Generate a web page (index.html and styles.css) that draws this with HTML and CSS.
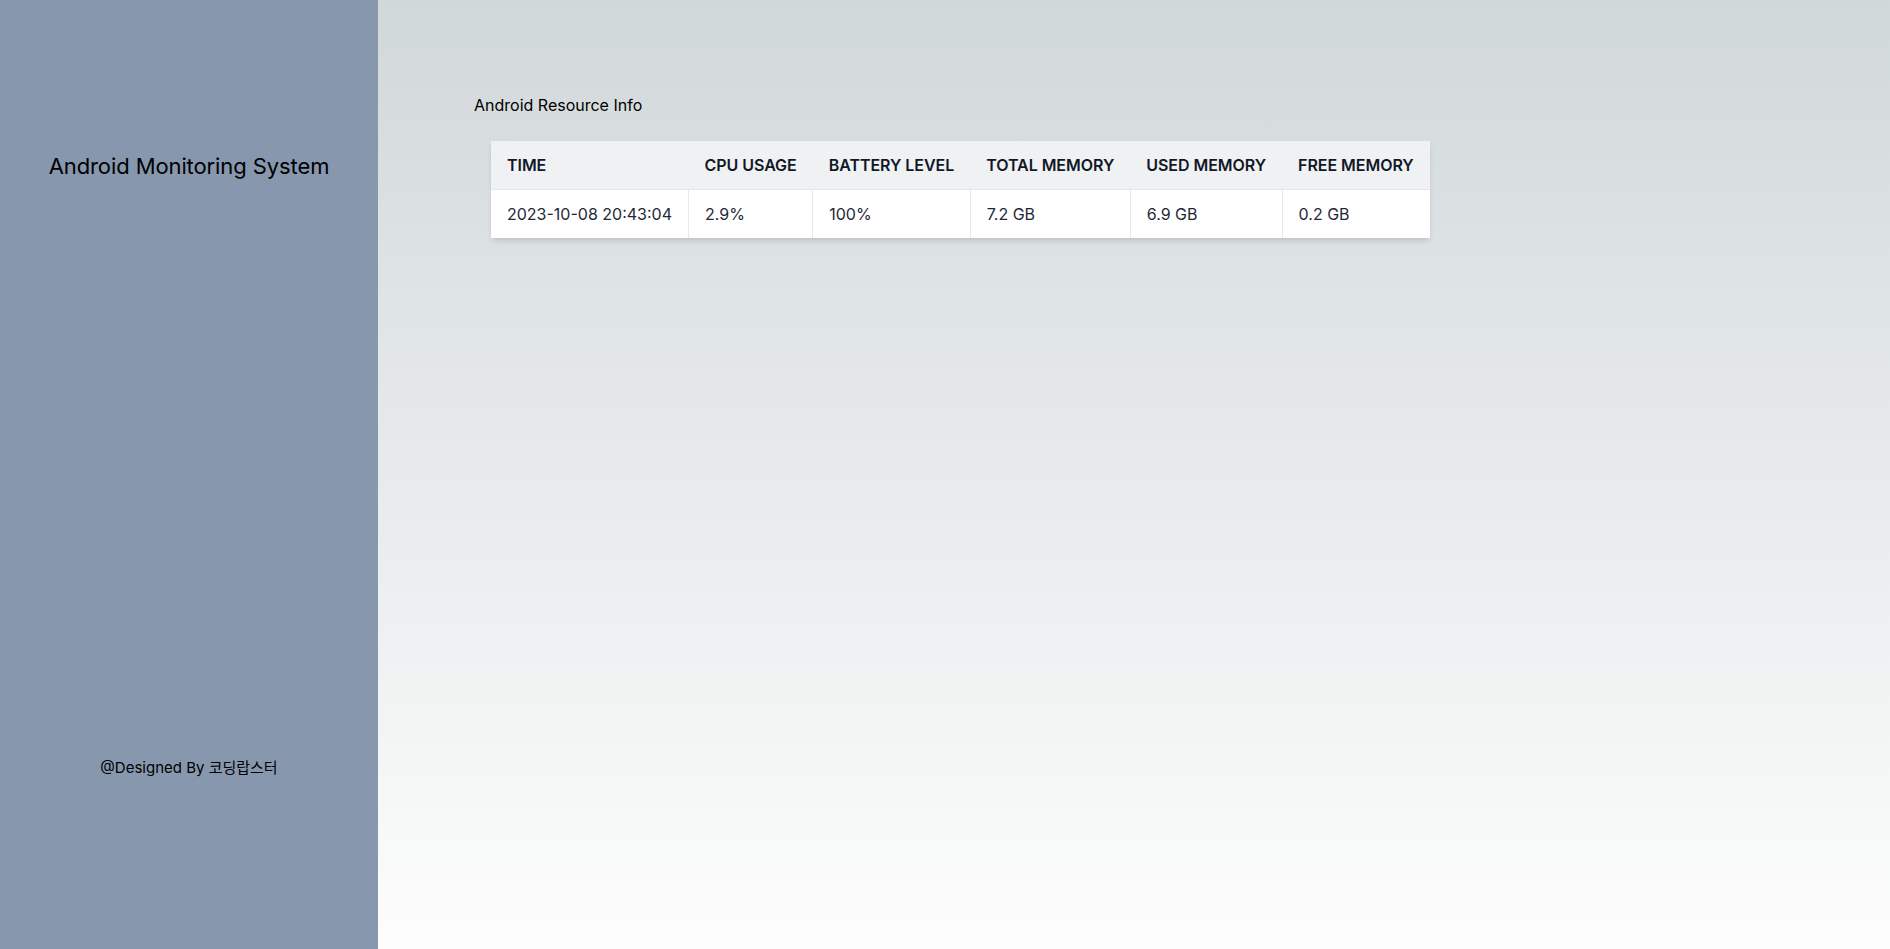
FILE: index.html
```html
<!DOCTYPE html>
<html lang="ko">
<head>
<meta charset="utf-8">
<title>Android Monitoring System</title>
<link rel="stylesheet" href="styles.css">
</head>
<body>
<div class="layout">
  <aside class="sidebar">
    <h1 class="brand">Android Monitoring System</h1>
    <p class="credit">@Designed By 코딩랍스터</p>
  </aside>
  <main class="main">
    <h2 class="section-title">Android Resource Info</h2>
    <table class="info-table">
      <thead>
        <tr>
          <th>TIME</th>
          <th>CPU USAGE</th>
          <th>BATTERY LEVEL</th>
          <th>TOTAL MEMORY</th>
          <th>USED MEMORY</th>
          <th>FREE MEMORY</th>
        </tr>
      </thead>
      <tbody>
        <tr>
          <td>2023-10-08 20:43:04</td>
          <td>2.9%</td>
          <td>100%</td>
          <td>7.2 GB</td>
          <td>6.9 GB</td>
          <td>0.2 GB</td>
        </tr>
      </tbody>
    </table>
  </main>
</div>
</body>
</html>
```

FILE: styles.css
```css
* { box-sizing: border-box; }
html, body { margin: 0; padding: 0; height: 100%; }
body {
  font-family: Inter, "Noto Sans", "Noto Sans CJK KR", sans-serif;
  color: #000;
}
.layout {
  display: flex;
  height: 949px;
}
.sidebar {
  width: 378px;
  flex: none;
  background: #8798ae;
  display: flex;
  flex-direction: column;
  align-items: center;
  padding: 152px 0 172px;
}
.brand {
  margin: 0;
  font-size: 22px;
  font-weight: 400;
  line-height: 29px;
  letter-spacing: -0.1px;
}
.credit {
  margin: auto 0 0;
  font-size: 15px;
  line-height: 19px;
  font-family: Inter, "Noto Sans CJK KR", sans-serif;
}
.main {
  flex: 1;
  background: linear-gradient(to bottom, #d1d8da, #fdfdfd);
  padding: 96px 0 0 96px;
}
.section-title {
  margin: 0;
  font-size: 16px;
  font-weight: 400;
  line-height: 19px;
}
.info-table {
  margin: 26px 0 0 17px;
  border-collapse: collapse;
  background: #fff;
  box-shadow: 0 4px 6px -1px rgba(0,0,0,0.1), 0 2px 4px -2px rgba(0,0,0,0.1);
  font-size: 16px;
}
.info-table th {
  background: #f0f1f3;
  color: #111827;
  font-weight: 600;
  text-align: left;
  padding: 0 16px;
  height: 48px;
  white-space: nowrap;
  letter-spacing: -0.05px;
  border-bottom: 1px solid #e5e7eb;
}
.info-table td {
  color: #1f2937;
  padding: 0 16px;
  height: 49px;
  white-space: nowrap;
  border-left: 1px solid #e5e7eb;
}
.info-table td:first-child { border-left: none; }
```
